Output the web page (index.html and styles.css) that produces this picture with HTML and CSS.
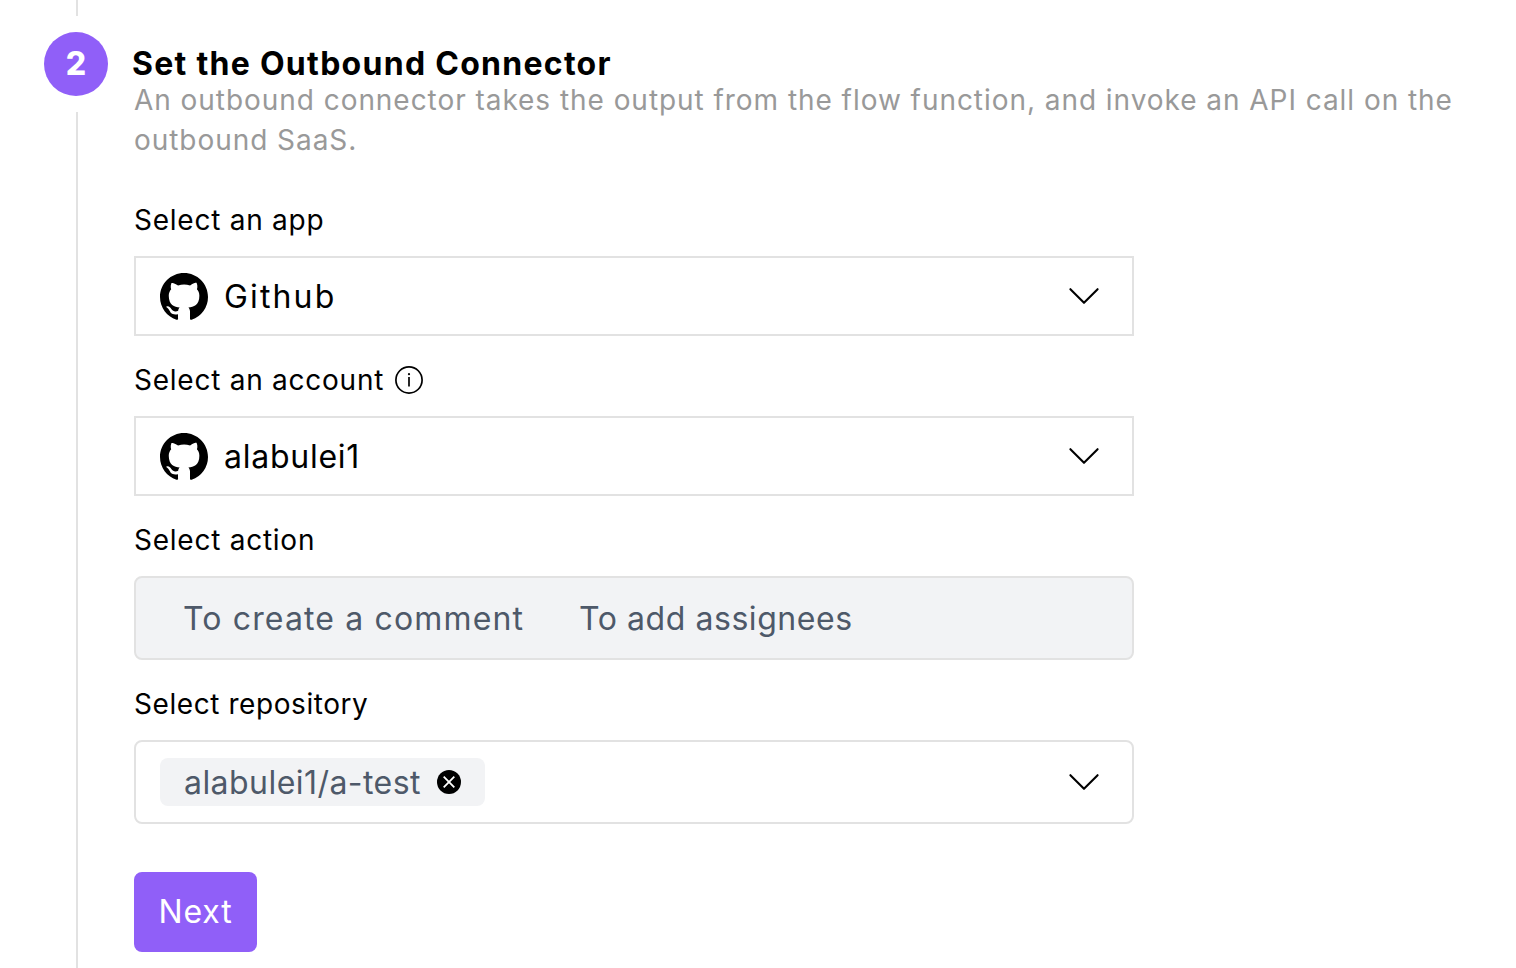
FILE: index.html
```html
<!DOCTYPE html>
<html lang="en">
<head>
<meta charset="utf-8">
<title>Set the Outbound Connector</title>
<link rel="stylesheet" href="styles.css">
</head>
<body>
<svg class="defs" width="0" height="0" aria-hidden="true">
  <symbol id="github" viewBox="0 0 16 16"><path fill-rule="evenodd" d="M8 0C3.58 0 0 3.58 0 8c0 3.54 2.29 6.53 5.47 7.59.4.07.55-.17.55-.38 0-.19-.01-.82-.01-1.49-2.01.37-2.53-.49-2.69-.94-.09-.23-.48-.94-.82-1.13-.28-.15-.68-.52-.01-.53.63-.01 1.08.58 1.23.82.72 1.21 1.87.87 2.33.66.07-.52.28-.87.51-1.07-1.78-.2-3.64-.89-3.64-3.95 0-.87.31-1.59.82-2.15-.08-.2-.36-1.02.08-2.12 0 0 .67-.21 2.2.82.64-.18 1.32-.27 2-.27s1.36.09 2 .27c1.53-1.04 2.2-.82 2.2-.82.44 1.1.16 1.92.08 2.12.51.56.82 1.27.82 2.15 0 3.07-1.87 3.75-3.65 3.95.29.25.54.73.54 1.48 0 1.07-.01 1.93-.01 2.2 0 .21.15.46.55.38A8.01 8.01 0 0 0 16 8c0-4.42-3.58-8-8-8z"/></symbol>
  <symbol id="chevron" viewBox="0 0 32 20"><path d="M2.4 3.2L16 16.8 29.6 3.2" fill="none" stroke="#000" stroke-width="2.1" stroke-linecap="round" stroke-linejoin="round"/></symbol>
</svg>
<main class="step">
  <div class="rail">
    <div class="line line-top"></div>
    <div class="number">2</div>
    <div class="line line-rest"></div>
  </div>
  <section class="content">
    <h2 class="title">Set the Outbound Connector</h2>
    <p class="description">An outbound connector takes the output from the flow function, and invoke an API call on the<br>outbound SaaS.</p>

    <div class="label">Select an app</div>
    <div class="select">
      <svg class="logo"><use href="#github"/></svg>
      <span class="value app-name">Github</span>
      <svg class="chevron"><use href="#chevron"/></svg>
    </div>

    <div class="label">Select an account
      <svg class="info" viewBox="0 0 28 28"><circle cx="14" cy="14" r="13.1" fill="none" stroke="#000" stroke-width="1.7"/><circle cx="14" cy="8.2" r="1.1"/><path d="M14 11v9.4" stroke="#000" stroke-width="1.7"/></svg>
    </div>
    <div class="select">
      <svg class="logo"><use href="#github"/></svg>
      <span class="value account-name">alabulei1</span>
      <svg class="chevron"><use href="#chevron"/></svg>
    </div>

    <div class="label">Select action</div>
    <div class="actions"><span class="action create">To create a comment</span><span class="action assign">To add assignees</span></div>

    <div class="label label-repo">Select repository</div>
    <div class="select repo">
      <span class="tag"><span class="tag-text">alabulei1/a-test</span>
        <svg class="remove" viewBox="0 0 24 24"><circle cx="12" cy="12" r="12"/><path d="M6.7 6.7l10.6 10.6M17.3 6.7L6.7 17.3" stroke="#fff" stroke-width="1.8"/></svg>
      </span>
      <svg class="chevron"><use href="#chevron"/></svg>
    </div>

    <button class="next">Next</button>
  </section>
</main>
</body>
</html>
```
FILE: styles.css
```css
* { box-sizing: border-box; }
body { margin: 0; background: #fff; color: #000; font-family: Inter, "Open Sans", sans-serif; }
.defs { display: block; }
.step { display: flex; width: 1516px; height: 968px; overflow: hidden; padding-left: 44px; }
.rail { width: 64px; flex: none; display: flex; flex-direction: column; align-items: center; gap: 16px; padding-left: 2px; }
.line { width: 2px; background: #e2e2e2; }
.line-top { height: 16px; }
.line-rest { flex: 1; }
.number { width: 64px; height: 64px; flex: none; margin-left: -2px; border-radius: 50%; background: #905ff8; color: #fff; font-size: 32px; font-weight: 800; line-height: 64px; text-align: center; }
.content { width: 1382px; margin-left: 26px; padding-top: 44px; }
.title { margin: 0 0 0 -2px; font-size: 32px; line-height: 40px; font-weight: 700; letter-spacing: 1.28px; white-space: nowrap; }
.description { margin: -4px 0 40px; font-size: 28px; line-height: 40px; letter-spacing: 0.95px; color: #999; white-space: nowrap; }
.label { display: flex; align-items: center; gap: 11px; height: 40px; margin-bottom: 16px; font-size: 28px; line-height: 40px; letter-spacing: 0.75px; }
.label-repo { letter-spacing: 0.57px; }
.info { width: 28px; height: 28px; }
.select { display: flex; align-items: center; width: 1000px; height: 80px; margin-bottom: 24px; padding: 0 32px 0 24px; border: 2px solid #e2e2e2; font-size: 32px; }
.logo { width: 48px; height: 48px; margin: 1px 16px 0 0; }
.value, .action, .tag-text { padding-bottom: 0; }
.app-name { letter-spacing: 2.15px; }
.account-name { letter-spacing: 0.75px; }
.chevron { width: 32px; height: 20px; margin-left: auto; }
.actions { display: flex; align-items: center; width: 1000px; height: 84px; margin-bottom: 24px; padding-left: 47px; border: 2px solid #e2e2e2; border-radius: 8px; background: #f2f3f5; color: #4e5969; font-size: 32px; }
.create { margin-right: 55px; letter-spacing: 1.14px; }
.assign { letter-spacing: 0.55px; }
.repo { height: 84px; margin-bottom: 48px; border-radius: 8px; }
.tag { display: flex; align-items: center; justify-content: space-between; width: 325px; height: 48px; padding: 0 24px; border-radius: 8px; background: #f2f3f5; color: #4e5969; }
.tag-text { letter-spacing: 0.45px; }
.remove { width: 24px; height: 24px; }
.next { display: block; width: 123px; height: 80px; padding: 0; border: 0; border-radius: 8px; background: #905ff8; color: #fff; font: 32px/80px Inter, "Open Sans", sans-serif; letter-spacing: 0.8px; }
```
